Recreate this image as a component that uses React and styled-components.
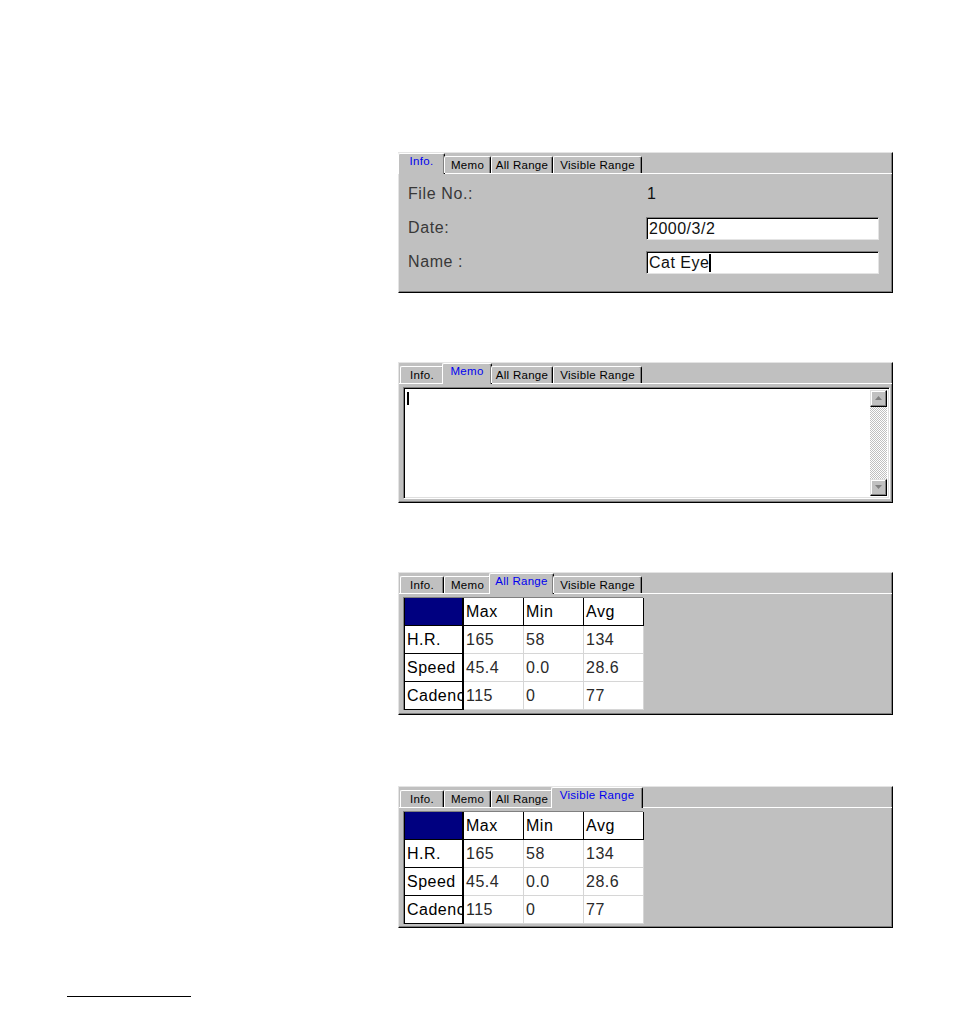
import React from "react";
import styled, { createGlobalStyle } from "styled-components";

const GlobalStyle = createGlobalStyle`
  body {
    margin: 0;
    background: #fff;
    font-family: "Liberation Sans", Arial, sans-serif;
  }
`;

const Page = styled.div`
  width: 954px;
  height: 1020px;
  padding-top: 152px;
  box-sizing: border-box;
`;

const Stack = styled.div`
  margin-left: 398px;
  display: flex;
  flex-direction: column;
  gap: 69px;
`;

const Panel = styled.div`
  box-sizing: border-box;
  width: 495px;
  height: ${(p) => p.$h}px;
  margin-top: ${(p) => p.$mt || 0}px;
  background: #c0c0c0;
  border-top: 1px solid #e4e4e4;
  border-left: 1px solid #e4e4e4;
  border-right: 1px solid #000;
  border-bottom: 1px solid #000;
  box-shadow: inset -1px -1px 0 #808080;
  display: flex;
  flex-direction: column;
`;

const TabStrip = styled.div`
  height: 20px;
  display: flex;
  align-items: flex-end;
  padding-left: 1px;
  position: relative;
  z-index: 1;
`;

const Tab = styled.div`
  box-sizing: border-box;
  width: ${(p) => p.$w + (p.$active ? 3 : 0)}px;
  height: ${(p) => (p.$active ? 21 : 17)}px;
  margin: ${(p) => (p.$active ? "0 -1px -1px -2px" : "0")};
  background: #c0c0c0;
  border-top: 1px solid #fff;
  border-left: 1px solid #fff;
  border-right: 1px solid #000;
  box-shadow: inset -1px 0 0 #808080;
  border-radius: 2px 2px 0 0;
  font-size: 11.5px;
  color: ${(p) => (p.$active ? "#0000f0" : "#000")};
  padding-top: ${(p) => (p.$active ? 1 : 2)}px;
  text-align: center;
  white-space: nowrap;
  letter-spacing: 0.3px;
`;

const Body = styled.div`
  flex: 1;
  border-top: 1px solid #fff;
  min-height: 0;
`;

const InfoGrid = styled.div`
  display: grid;
  grid-template-columns: 238px 233px;
  grid-auto-rows: 34px;
  align-items: center;
  padding: 3px 0 0 9px;
`;

const Label = styled.div`
  font-size: 16px;
  color: #383838;
  letter-spacing: 0.6px;
`;

const Value = styled.div`
  font-size: 16px;
  color: #101010;
  padding-left: 1px;
`;

const Field = styled.div`
  box-sizing: border-box;
  height: 23px;
  background: #fff;
  border-top: 1px solid #808080;
  border-left: 1px solid #808080;
  border-right: 1px solid #e4e4e4;
  border-bottom: 1px solid #e4e4e4;
  box-shadow: inset 1px 1px 0 #000;
  font-size: 16px;
  color: #111;
  letter-spacing: 0.5px;
  padding: 2px 0 0 2px;
  display: flex;
  align-items: center;
`;

const Caret = styled.span`
  display: inline-block;
  width: 2px;
  height: ${(p) => p.$h || 18}px;
  background: #000;
`;

const MemoBody = styled(Body)`
  padding: 3px 2px 2px 4px;
  display: flex;
`;

const MemoBox = styled.div`
  flex: 1;
  box-sizing: border-box;
  height: 112px;
  display: flex;
  background: #fff;
  border-top: 1px solid #808080;
  border-left: 1px solid #808080;
  border-right: 1px solid #fff;
  border-bottom: 1px solid #fff;
  box-shadow: inset 1px 1px 0 #000, inset -1px -1px 0 #dfdfdf;
`;

const MemoText = styled.div`
  flex: 1;
  padding: 3px 0 0 3px;
`;

const ScrollBar = styled.div`
  width: 17px;
  margin: 2px 2px 2px 0;
  display: flex;
  flex-direction: column;
`;

const ScrollButton = styled.div`
  box-sizing: border-box;
  height: 17px;
  background: #c0c0c0;
  border-top: 1px solid #dfdfdf;
  border-left: 1px solid #dfdfdf;
  border-right: 1px solid #000;
  border-bottom: 1px solid #000;
  box-shadow: inset -1px -1px 0 #808080, inset 1px 1px 0 #fff;
  display: flex;
  align-items: center;
  justify-content: center;
`;

const ScrollTrack = styled.div`
  flex: 1;
  background-color: #fff;
  background-image: repeating-conic-gradient(#c0c0c0 0 25%, #fff 0 50%);
  background-size: 2px 2px;
`;

const Arrow = ({ down }) => (
  <svg width="9" height="5" viewBox="0 0 9 5">
    <path
      d={down ? "M1 0h7L4.5 4z" : "M4.5 0L8 4H1z"}
      fill="#808080"
    />
  </svg>
);

const TableBody = styled(Body)`
  padding: 3px 0 0 4px;
`;

const Grid = styled.div`
  display: grid;
  grid-template-columns: repeat(4, 60px);
  grid-auto-rows: 28px;
  width: 240px;
  box-sizing: border-box;
  border-top: 1px solid #808080;
  border-left: 1px solid #808080;
  box-shadow: inset 1px 1px 0 #000;
  background: #fff;
`;

const Cell = styled.div`
  box-sizing: border-box;
  font-size: 16px;
  letter-spacing: 0.5px;
  color: ${(p) => (p.$kind === "data" ? "#2a2a2a" : "#000")};
  background: ${(p) => (p.$kind === "corner" ? "#000080" : "#fff")};
  padding: 1px 0 0 ${(p) => (p.$kind === "row" ? 2 : 2)}px;
  display: flex;
  align-items: center;
  white-space: nowrap;
  overflow: hidden;
  text-overflow: clip;
  border-right: ${(p) =>
    p.$kind === "row" || p.$kind === "corner"
      ? "2px solid #000"
      : p.$kind === "head"
      ? "1px solid #000"
      : "1px solid #d6d6d6"};
  border-bottom: ${(p) =>
    p.$kind === "data" ? "1px solid #d6d6d6" : "1px solid #000"};
  box-shadow: ${(p) =>
    p.$kind === "data" || p.$kind === "corner"
      ? "none"
      : "inset 1px 1px 0 #fff"};
  border-left: ${(p) => (p.$first ? "1px solid #000" : "none")};
`;

const Footnote = styled.div`
  margin: 68px 0 0 67px;
  width: 124px;
  border-top: 1px solid #000;
`;

const TABS = [
  { label: "Info.", w: 44 },
  { label: "Memo", w: 47 },
  { label: "All Range", w: 62 },
  { label: "Visible Range", w: 89 },
];

const Tabs = ({ active }) => (
  <TabStrip>
    {TABS.map((t, i) => (
      <Tab key={t.label} $w={t.w} $active={i === active}>
        {t.label}
      </Tab>
    ))}
  </TabStrip>
);

const rows = [
  ["H.R.", "165", "58", "134"],
  ["Speed", "45.4", "0.0", "28.6"],
  ["Cadence", "115", "0", "77"],
];

const RangeTable = () => (
  <Grid>
    <Cell $kind="corner" $first />
    <Cell $kind="head">Max</Cell>
    <Cell $kind="head">Min</Cell>
    <Cell $kind="head">Avg</Cell>
    {rows.map((r) =>
      r.map((v, i) => (
        <Cell key={r[0] + i} $kind={i === 0 ? "row" : "data"} $first={i === 0}>
          {v}
        </Cell>
      ))
    )}
  </Grid>
);

export default function App() {
  return (
    <>
      <GlobalStyle />
      <Page>
        <Stack>
          <Panel $h={141}>
            <Tabs active={0} />
            <Body>
              <InfoGrid>
                <Label>File No.:</Label>
                <Value>1</Value>
                <Label>Date:</Label>
                <Field>2000/3/2</Field>
                <Label>Name :</Label>
                <Field>
                  Cat Eye
                  <Caret />
                </Field>
              </InfoGrid>
            </Body>
          </Panel>

          <Panel $h={141}>
            <Tabs active={1} />
            <MemoBody>
              <MemoBox>
                <MemoText>
                  <Caret $h={13} />
                </MemoText>
                <ScrollBar>
                  <ScrollButton>
                    <Arrow />
                  </ScrollButton>
                  <ScrollTrack />
                  <ScrollButton>
                    <Arrow down />
                  </ScrollButton>
                </ScrollBar>
              </MemoBox>
            </MemoBody>
          </Panel>

          <Panel $h={143}>
            <Tabs active={2} />
            <TableBody>
              <RangeTable />
            </TableBody>
          </Panel>

          <Panel $h={142} $mt={2}>
            <Tabs active={3} />
            <TableBody>
              <RangeTable />
            </TableBody>
          </Panel>
        </Stack>
        <Footnote />
      </Page>
    </>
  );
}
